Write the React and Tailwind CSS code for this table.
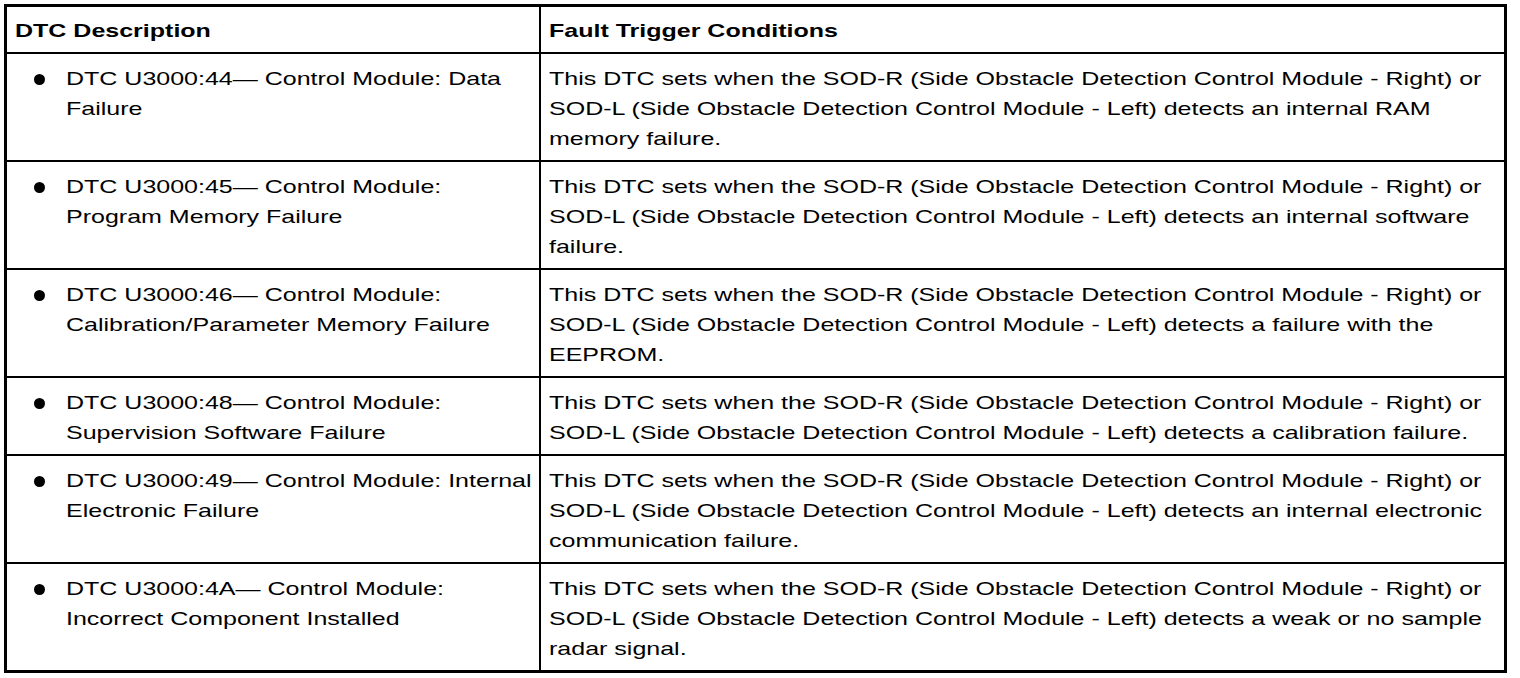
import React from "react";

const rows = [
  {
    left: ["DTC U3000:44\u2014 Control Module: Data", "Failure"],
    right: [
      "This DTC sets when the SOD-R (Side Obstacle Detection Control Module - Right) or",
      "SOD-L (Side Obstacle Detection Control Module - Left) detects an internal RAM",
      "memory failure.",
    ],
  },
  {
    left: ["DTC U3000:45\u2014 Control Module:", "Program Memory Failure"],
    right: [
      "This DTC sets when the SOD-R (Side Obstacle Detection Control Module - Right) or",
      "SOD-L (Side Obstacle Detection Control Module - Left) detects an internal software",
      "failure.",
    ],
  },
  {
    left: ["DTC U3000:46\u2014 Control Module:", "Calibration/Parameter Memory Failure"],
    right: [
      "This DTC sets when the SOD-R (Side Obstacle Detection Control Module - Right) or",
      "SOD-L (Side Obstacle Detection Control Module - Left) detects a failure with the",
      "EEPROM.",
    ],
  },
  {
    left: ["DTC U3000:48\u2014 Control Module:", "Supervision Software Failure"],
    right: [
      "This DTC sets when the SOD-R (Side Obstacle Detection Control Module - Right) or",
      "SOD-L (Side Obstacle Detection Control Module - Left) detects a calibration failure.",
    ],
  },
  {
    left: ["DTC U3000:49\u2014 Control Module: Internal", "Electronic Failure"],
    right: [
      "This DTC sets when the SOD-R (Side Obstacle Detection Control Module - Right) or",
      "SOD-L (Side Obstacle Detection Control Module - Left) detects an internal electronic",
      "communication failure.",
    ],
  },
  {
    left: ["DTC U3000:4A\u2014 Control Module:", "Incorrect Component Installed"],
    right: [
      "This DTC sets when the SOD-R (Side Obstacle Detection Control Module - Right) or",
      "SOD-L (Side Obstacle Detection Control Module - Left) detects a weak or no sample",
      "radar signal.",
    ],
  },
];

function Line({ children, bold }) {
  return (
    <div
      className={
        "w-max h-[30px] leading-[30px] whitespace-nowrap origin-left scale-x-[1.316] " +
        (bold ? "font-bold" : "font-normal")
      }
    >
      {children}
    </div>
  );
}

export default function App() {
  return (
    <div
      className="bg-white w-[1520px] h-[678px] pt-[4px] pl-[4px] text-black text-[19px] overflow-hidden"
      style={{ fontFamily: '"Liberation Sans", Arial, Helvetica, sans-serif' }}
    >
      <div className="w-[1503px] border-[3px] border-black flex flex-col">
        <div className="flex border-b-2 border-black">
          <div className="w-[534px] shrink-0 border-r-2 border-black pl-[8px] pt-[9px] pb-[6px]">
            <Line bold>DTC Description</Line>
          </div>
          <div className="flex-1 pl-[8px] pt-[9px] pb-[6px]">
            <Line bold>Fault Trigger Conditions</Line>
          </div>
        </div>
        {rows.map((r, i) => (
          <div
            key={i}
            className={
              "flex " + (i < rows.length - 1 ? "border-b-2 border-black" : "")
            }
          >
            <div className="w-[534px] shrink-0 border-r-2 border-black pt-[10px] pb-[6px] flex">
              <div className="w-[59px] shrink-0 pl-[27px] h-[30px] flex items-center">
                <div className="w-[11px] h-[11px] rounded-full bg-black" />
              </div>
              <div className="flex flex-col">
                {r.left.map((t, j) => (
                  <Line key={j}>{t}</Line>
                ))}
              </div>
            </div>
            <div className="flex-1 pl-[8px] pt-[10px] pb-[6px] flex flex-col">
              {r.right.map((t, j) => (
                <Line key={j}>{t}</Line>
              ))}
            </div>
          </div>
        ))}
      </div>
    </div>
  );
}
